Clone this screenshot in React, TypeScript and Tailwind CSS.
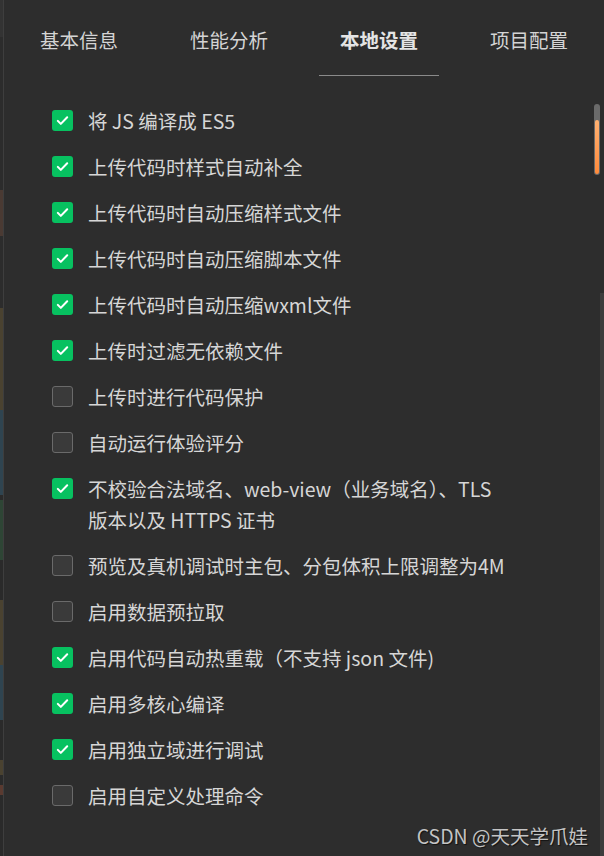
import React from 'react';

const tabs = ['基本信息', '性能分析', '本地设置', '项目配置'];

const options: { label: React.ReactNode; checked: boolean }[] = [
  { label: '将 JS 编译成 ES5', checked: true },
  { label: '上传代码时样式自动补全', checked: true },
  { label: '上传代码时自动压缩样式文件', checked: true },
  { label: '上传代码时自动压缩脚本文件', checked: true },
  { label: '上传代码时自动压缩wxml文件', checked: true },
  { label: '上传时过滤无依赖文件', checked: true },
  { label: '上传时进行代码保护', checked: false },
  { label: '自动运行体验评分', checked: false },
  {
    label: (
      <>
        不校验合法域名、web-view（业务域名）、TLS
        <br />
        版本以及 HTTPS 证书
      </>
    ),
    checked: true,
  },
  { label: '预览及真机调试时主包、分包体积上限调整为4M', checked: false },
  { label: '启用数据预拉取', checked: false },
  { label: '启用代码自动热重载（不支持 json 文件)', checked: true },
  { label: '启用多核心编译', checked: true },
  { label: '启用独立域进行调试', checked: true },
  { label: '启用自定义处理命令', checked: false },
];

// colours of the window peeking out on the left edge
const strip = [
  ['#333333', 37],
  ['#2c2c2c', 153],
  ['#4a3a33', 46],
  ['#2c2c2c', 72],
  ['#4a4230', 102],
  ['#2f4450', 85],
  ['#2a2a2a', 5],
  ['#2e4535', 60],
  ['#2a2a2a', 40],
  ['#4a4230', 65],
  ['#2f4450', 55],
  ['#2a2a2a', 40],
  ['#4a4230', 15],
  ['#2a2a2a', 10],
  ['#5a3a30', 10],
  ['#2a2a2a', 61],
] as const;

function Checkbox({ checked }: { checked: boolean }) {
  if (checked) {
    return (
      <div className="w-[21px] h-[21px] shrink-0 rounded-[3px] bg-[#07c160] flex items-center justify-center">
        <svg width="15" height="15" viewBox="0 0 16 16" fill="none">
          <path d="M3 8.4l3.2 3.2L13 4.6" stroke="white" strokeWidth="2.2" strokeLinecap="round" strokeLinejoin="round" />
        </svg>
      </div>
    );
  }
  return <div className="w-[21px] h-[21px] shrink-0 rounded-[3px] bg-[#3a3a3a] border border-[#6a6a6a]" />;
}

export default function App() {
  return (
    <div
      className="w-[604px] h-[856px] bg-[#2d2d2d] flex overflow-hidden relative"
      style={{ fontFamily: '"Noto Sans CJK SC", "Noto Sans", sans-serif' }}
    >
      <div className="w-[3px] flex flex-col shrink-0">
        {strip.map(([c, h], i) => (
          <div key={i} style={{ background: c, height: h }} />
        ))}
      </div>
      <div className="w-px bg-[#3e3e3e] shrink-0" />

      <div className="flex-1 flex flex-col">
        <div className="flex h-[76px]">
          {tabs.map((t, i) => (
            <div key={t} className="w-[150px] flex flex-col items-center">
              <div
                className={`h-[75px] flex items-center pt-[4px] text-[19.5px] ${
                  i === 2 ? 'font-bold text-[#e4e4e4]' : 'text-[#d4d4d4]'
                }`}
              >
                {t}
              </div>
              {i === 2 && <div className="w-[120px] h-px bg-[#8a8a8a]" />}
            </div>
          ))}
        </div>

        <div className="flex flex-col gap-[15px] pl-[48px] pt-[29px]">
          {options.map((o, i) => (
            <div key={i} className="flex items-start">
              <div className="h-[31px] flex items-center">
                <Checkbox checked={o.checked} />
              </div>
              <div className="ml-[15px] text-[19.5px] leading-[31px] text-[#d6d6d6] whitespace-nowrap">
                {o.label}
              </div>
            </div>
          ))}
        </div>
      </div>

      {/* scrollbar */}
      <div className="absolute left-[594px] top-[104px] w-[6px] h-[71px] rounded-full bg-[#6a6a6a] overflow-hidden flex flex-col justify-end">
        <div className="h-[54px] mx-[1px] mb-[1px] rounded-full bg-gradient-to-b from-[#ffb070] to-[#ff8a3a]" />
      </div>
      <div className="absolute left-[600px] top-[293px] w-[4px] h-[563px] bg-[#3c3c3c]" />

      <div
        className="absolute right-[16px] bottom-[6px] text-[19.5px] text-[#c4c4c4]"
        style={{ textShadow: '1px 1px 1px rgba(0,0,0,0.6)' }}
      >
        CSDN @天天学爪娃
      </div>
    </div>
  );
}
